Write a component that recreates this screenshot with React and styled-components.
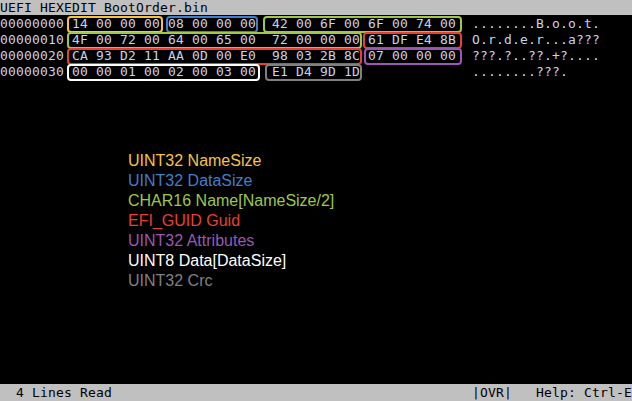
import React from "react";
import styled, { createGlobalStyle } from "styled-components";

const Global = createGlobalStyle`
  html, body { margin: 0; padding: 0; background: #000; }
  body { width: 632px; height: 401px; overflow: hidden; }
  #root { width: 632px; height: 401px; }
`;

const Screen = styled.div`
  width: 632px;
  height: 401px;
  background: #000;
  display: flex;
  flex-direction: column;
  font-family: "DejaVu Sans Mono", "Liberation Mono", monospace;
  font-size: 13px;
  letter-spacing: 0.174px;
`;

const Bar = styled.div`
  background: #c0c0c0;
  color: #000;
  height: ${(p) => p.$h}px;
  line-height: ${(p) => p.$h}px;
  white-space: pre;
  display: flex;
  justify-content: space-between;
  flex: none;
`;

const HexArea = styled.div`
  display: flex;
  flex-direction: column;
  color: #c4d4ea;
  flex: none;
  padding-top: 1px;
`;

const HexRow = styled.div`
  height: 16px;
  line-height: 16px;
  white-space: pre;
`;

const Field = styled.span`
  display: inline-block;
  position: relative;
  height: 16px;
  &::after {
    content: "";
    position: absolute;
    top: 0;
    bottom: -0.5px;
    left: -${(p) => p.$l}px;
    right: -${(p) => p.$r}px;
    border: 2px solid ${(p) => p.$c};
    border-radius: 4px;
    pointer-events: none;
  }
`;

const Legend = styled.div`
  flex: 1;
  padding: 71px 0 0 128px;
  display: flex;
  flex-direction: column;
  font-family: "Liberation Sans", Arial, sans-serif;
  font-size: 16px;
  letter-spacing: 0;
`;

const LegendLine = styled.div`
  height: 20px;
  line-height: 20px;
  color: ${(p) => p.$c};
  white-space: pre;
`;

const C = {
  yellow: "#f8c440",
  blue: "#3f7fcc",
  green: "#9fc846",
  red: "#e8402f",
  purple: "#9a58b4",
  white: "#ffffff",
  grey: "#808080",
};

export default function App() {
  return (
    <>
      <Global />
      <Screen>
        <Bar $h={15}>
          <span>UEFI HEXEDIT BootOrder.bin</span>
        </Bar>
        <HexArea>
          <HexRow>
            {"00000000 "}
            <Field $c={C.yellow} $l={5} $r={3}>14 00 00 00</Field>
            {" "}
            <Field $c={C.blue} $l={2} $r={2}>08 00 00 00</Field>
            {"  "}
            <Field $c={C.green} $l={9} $r={6}>42 00 6F 00 6F 00 74 00</Field>
            {"  ........B.o.o.t."}
          </HexRow>
          <HexRow>
            {"00000010 "}
            <Field $c={C.green} $l={5} $r={2}>4F 00 72 00 64 00 65 00  72 00 00 00</Field>
            {" "}
            <Field $c={C.red} $l={5} $r={6}>61 DF E4 8B</Field>
            {"  O.r.d.e.r...a???"}
          </HexRow>
          <HexRow>
            {"00000020 "}
            <Field $c={C.red} $l={5} $r={2}>CA 93 D2 11 AA 0D 00 E0  98 03 2B 8C</Field>
            {" "}
            <Field $c={C.purple} $l={4} $r={6}>07 00 00 00</Field>
            {"  ???.?..??.+?...."}
          </HexRow>
          <HexRow>
            {"00000030 "}
            <Field $c={C.white} $l={5} $r={4}>00 00 01 00 02 00 03 00</Field>
            {"  "}
            <Field $c={C.grey} $l={7} $r={2}>E1 D4 9D 1D</Field>
            {"              ........???."}
          </HexRow>
        </HexArea>
        <Legend>
          <LegendLine $c={C.yellow}>UINT32 NameSize</LegendLine>
          <LegendLine $c={C.blue}>UINT32 DataSize</LegendLine>
          <LegendLine $c={C.green}>CHAR16 Name[NameSize/2]</LegendLine>
          <LegendLine $c={C.red}>EFI_GUID Guid</LegendLine>
          <LegendLine $c={C.purple}>UINT32 Attributes</LegendLine>
          <LegendLine $c={C.white}>UINT8 Data[DataSize]</LegendLine>
          <LegendLine $c={C.grey}>UINT32 Crc</LegendLine>
        </Legend>
        <Bar $h={17}>
          <span>{"  4 Lines Read"}</span>
          <span>{"|OVR|   Help: Ctrl-E"}</span>
        </Bar>
      </Screen>
    </>
  );
}
